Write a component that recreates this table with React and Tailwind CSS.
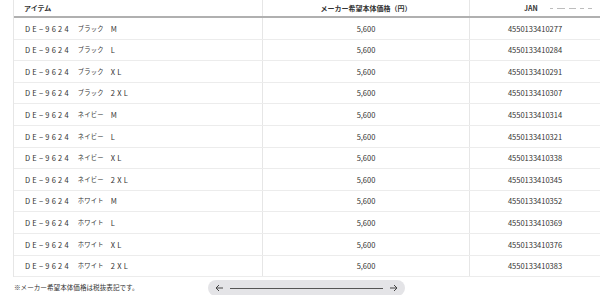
import React from "react";

const colors = ["ブラック", "ネイビー", "ホワイト"];
const sizes = ["M", "L", "XL", "2XL"];
const jans = [
  "4550133410277", "4550133410284", "4550133410291", "4550133410307",
  "4550133410314", "4550133410321", "4550133410338", "4550133410345",
  "4550133410352", "4550133410369", "4550133410376", "4550133410383",
];
const rows = [];
colors.forEach((c) => sizes.forEach((s) => rows.push({ c, s })));

export default function App() {
  const jp = { fontFamily: '"Noto Sans CJK JP", "Noto Sans", sans-serif' };
  return (
    <div className="w-[600px] h-[295px] overflow-hidden bg-white text-[#333]" style={jp}>
      <div className="ml-[13px] w-[620px] border-l border-[#e6e6e6]">
        <div className="flex h-[18px] border-b-2 border-[#b0b0b0] text-[7px] font-bold items-center">
          <div className="w-[248px] pl-[10px]">アイテム</div>
          <div className="w-[207px] h-full border-l border-[#e6e6e6] flex items-center justify-center">メーカー希望本体価格（円）</div>
          <div className="flex-1 h-full border-l border-[#e6e6e6] flex items-center pl-[54px]">
            <span>JAN</span>
            <span className="ml-[12px] flex items-center gap-[4px]">
              <span className="w-[3px] h-[1px] bg-[#bdbdbd]" />
              <span className="w-[8px] h-[1px] bg-[#bdbdbd]" />
              <span className="w-[7px] h-[1px] bg-[#bdbdbd]" />
              <span className="w-[4px] h-[1px] bg-[#bdbdbd]" />
              <span className="w-[4px] h-[1px] bg-[#bdbdbd]" />
            </span>
          </div>
        </div>
        {rows.map((r, i) => (
          <div key={i} className="flex h-[21.6px] border-b border-[#ececec] items-center">
            <div className="w-[248px] pl-[11px] flex items-center whitespace-nowrap">
              <span className="text-[7.5px] tracking-[2.2px]">DE−9624</span>
              <span className="ml-[7px] text-[6.3px] tracking-[0.2px]">{r.c}</span>
              <span className="ml-[7px] text-[7.5px] tracking-[2.2px]">{r.s}</span>
            </div>
            <div className="w-[207px] h-full border-l border-[#e6e6e6] flex items-center justify-center text-[7.5px]">5,600</div>
            <div className="flex-1 h-full border-l border-[#e6e6e6] flex items-center">
              <span className="w-[130px] text-center text-[7.5px] text-[#333]">{jans[i]}</span>
            </div>
          </div>
        ))}
      </div>
      <div className="flex items-center mt-[3px] h-[16px]">
        <div className="pl-[14px] w-[208px] text-[6.6px] whitespace-nowrap">※メーカー希望本体価格は税抜表記です。</div>
        <div className="w-[197px] h-[16px] rounded-full bg-[#e4e4e7] flex items-center px-[7px] gap-[6px]">
          <svg width="9" height="8" viewBox="0 0 9 8" fill="none" stroke="#444" strokeWidth="1">
            <path d="M8 4H1M4 1L1 4l3 3" />
          </svg>
          <div className="flex-1 h-px bg-[#555]" />
          <svg width="9" height="8" viewBox="0 0 9 8" fill="none" stroke="#444" strokeWidth="1">
            <path d="M1 4h7M5 1l3 3-3 3" />
          </svg>
        </div>
      </div>
    </div>
  );
}
